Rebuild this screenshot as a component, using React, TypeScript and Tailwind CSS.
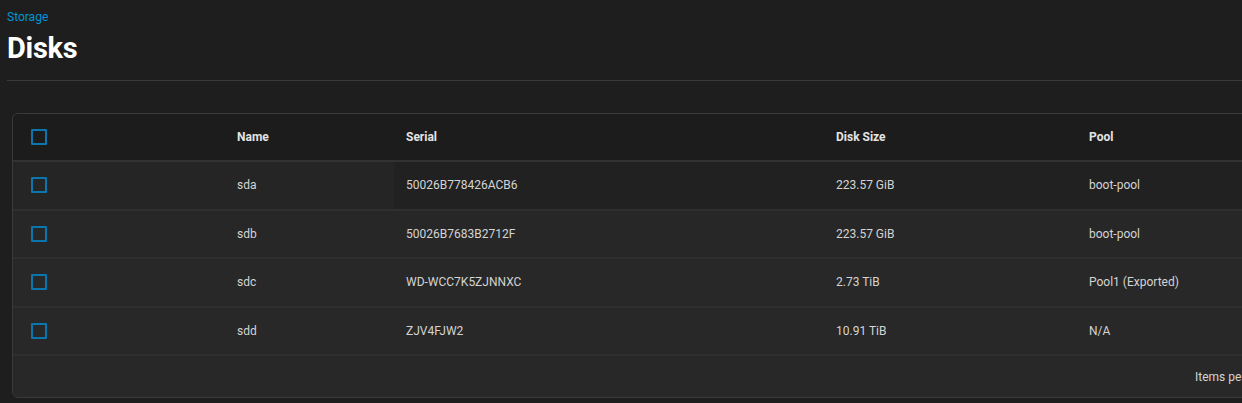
import React from 'react';

interface Disk {
  name: string;
  serial: string;
  size: string;
  pool: string;
}

const disks: Disk[] = [
  { name: 'sda', serial: '50026B778426ACB6', size: '223.57 GiB', pool: 'boot-pool' },
  { name: 'sdb', serial: '50026B7683B2712F', size: '223.57 GiB', pool: 'boot-pool' },
  { name: 'sdc', serial: 'WD-WCC7K5ZJNNXC', size: '2.73 TiB', pool: 'Pool1 (Exported)' },
  { name: 'sdd', serial: 'ZJV4FJW2', size: '10.91 TiB', pool: 'N/A' },
];

const cols = 'grid grid-cols-[212px_169px_430px_253px_1fr]';

function Checkbox() {
  return <div className="w-4 h-4 border-2 border-[#0b76ad] rounded-[1px]" />;
}

export default function App() {
  return (
    <div
      className="w-[1242px] h-[403px] overflow-hidden bg-[#1e1e1e] text-[#d4d4d4]"
      style={{ fontFamily: 'Roboto, "Liberation Sans", sans-serif' }}
    >
      <div className="pl-[7px] pt-[9px]">
        <div className="text-[12px] leading-4 text-[#0095d5]">Storage</div>
        <h1 className="mt-[7px] text-[29px] leading-8 font-bold text-white tracking-[-0.3px]">Disks</h1>
        <div className="mt-[16px] w-[1400px] border-b border-[#3a3a3a]" />

        <div className="mt-[32px] ml-[5px] w-[1400px] h-[285px] rounded-[6px] border border-[#3a3a3a] bg-[#262626] overflow-hidden">
          <div className={`${cols} h-[48px] items-center bg-[#1c1c1c] border-b-2 border-[#323232] text-[12px] font-bold text-[#e4e4e4]`}>
            <div className="pl-[18px]">
              <Checkbox />
            </div>
            <div className="px-3">Name</div>
            <div className="px-3">Serial</div>
            <div className="px-3">Disk Size</div>
            <div className="px-3">Pool</div>
          </div>

          {disks.map((d, i) => (
            <div
              key={d.name}
              className={`${cols} h-[48.5px] border-b-2 border-[#2f2f2f] text-[12px] ${
                i === 0 ? 'bg-[#252525]' : i === 1 ? 'bg-[#272727]' : 'bg-[#282828]'
              }`}
            >
              <div className="pl-[18px] flex items-center">
                <Checkbox />
              </div>
              <div className="px-3 flex items-center">{d.name}</div>
              <div className={`px-3 flex items-center ${i === 0 ? 'bg-[#212121]' : ''}`}>{d.serial}</div>
              <div className={`px-3 flex items-center ${i === 0 ? 'bg-[#212121]' : ''}`}>{d.size}</div>
              <div className={`px-3 flex items-center ${i === 0 ? 'bg-[#212121]' : ''}`}>{d.pool}</div>
            </div>
          ))}

          <div className="h-[42px] flex items-center pl-[1182px] text-[12px] bg-[#282828]">
            Items per page:
          </div>
        </div>
      </div>
    </div>
  );
}
